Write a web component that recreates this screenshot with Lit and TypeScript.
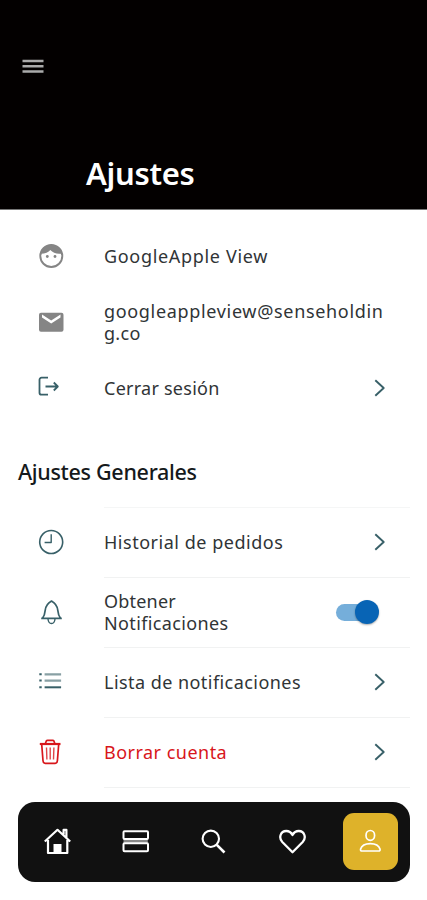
import { LitElement, html, svg, css, nothing } from "lit";
import { customElement, property } from "lit/decorators.js";
import { classMap } from "lit/directives/class-map.js";

const icons: Record<string, unknown> = {
  menu: svg`<path d="M2.500 8h21M2.500 13.200h21M2.500 18.400h21" stroke-width="2.500"/>`,
  face: svg`<circle cx="13.300" cy="13" r="11" stroke-width="1.900"/><path d="M3 10.800C4 5.500 8 1.800 13.300 1.800c5.500 0 10 4 10.700 8.700-4.800 1-9-.6-11.700-3.500-1.700 2.300-5.300 3.700-9.300 3.800z" fill="currentColor" stroke="none"/><circle cx="9.300" cy="13.500" r="1.400" fill="currentColor" stroke="none"/><circle cx="17" cy="13.500" r="1.400" fill="currentColor" stroke="none"/>`,
  mail: svg`<path fill="currentColor" stroke="none" d="M3 3.800h20.500a2 2 0 0 1 2 2v15a2 2 0 0 1-2 2H3a2 2 0 0 1-2-2v-15a2 2 0 0 1 2-2zM13.200 14.500l9.300-6V5.600L13.200 11.600 4 5.600V8.500z" fill-rule="evenodd"/>`,
  exit: svg`<path d="M10 2.700H3.500a2 2 0 0 0-2 2v13a2 2 0 0 0 2 2H10M7.500 11.500h12M15.800 7.500l4 4-4 4" stroke-width="1.800"/>`,
  clock: svg`<circle cx="13.200" cy="13" r="11.500" stroke-width="1.600"/><path d="M13.200 5.300v8.200H6.600" stroke-width="1.400"/>`,
  bell: svg`<path d="M3.200 19.300h20.600M4.500 19.300c2-2.500 2.400-5 2.700-8 .4-4.300 2.800-7.300 6.300-9.300 3.500 2 5.900 5 6.300 9.300.3 3 .7 5.500 2.700 8" stroke-width="1.700"/><path d="M10 20c.3 3 1.700 4.500 3.500 4.500s3.200-1.500 3.500-4.500" stroke-width="1.400"/>`,
  list: svg`<path d="M1.300 5.300h2.400M1.300 11.600h2.400M1.300 18.300h2.400" stroke-width="2"/><path d="M6.600 5.300h16.500M6.600 11.600h16.500" stroke-width="2.200" opacity=".6"/><path d="M6.600 18.300h16.500" stroke-width="2"/>`,
  trash: svg`<path d="M1.800 5h20.700" stroke-width="2.200"/><path d="M7.500 4.300l.8-2.300Q8.700 1.300 9.500 1.300h5.200q.8 0 1.200.7l.8 2.300M3.700 5.300l1.300 16.400q.2 2.600 2.200 2.600h10q2 0 2.200-2.600l1.300-16.400" stroke-width="1.700"/><path d="M8.500 8.500l.4 12M12.200 8.500v12M15.900 8.500l-.4 12" stroke-width="1.400" opacity=".8"/>`,
  chevron: svg`<path d="M9.300 5.200l8.400 7.800-8.400 7.800" stroke-width="1.900"/>`,
  home: svg`<path d="M.8 13.500 13.500 1.800l12.700 11.700M4 12v13h19.300V12M19.600 6.500V1.800h2.800v8" stroke-width="2.200"/><path d="M9.500 25v-9h8v9z" fill="currentColor" stroke="none"/>`,
  rows: svg`<path d="M1.500 12.900h24.300" stroke-width="4" opacity=".5"/><rect x="1.500" y="3.200" width="24.500" height="7.800" rx="1" stroke-width="2"/><rect x="1.500" y="15.200" width="24.500" height="8" rx="1" stroke-width="2"/>`,
  search: svg`<circle cx="10.800" cy="10.800" r="8.200" stroke-width="2.100"/><path d="m16.800 16.800 7.700 7.700" stroke-width="2.600"/>`,
  heart: svg`<path d="M13.500 24.200 3.300 14C-.5 10 1.300 3 7.300 3c2.900 0 5 1.700 6.200 4 1.200-2.300 3.300-4 6.200-4 6 0 7.800 7 4 11z" stroke-width="2.300"/>`,
  user: svg`<ellipse cx="13.300" cy="7.400" rx="4.300" ry="4.900" stroke-width="1.700"/><path d="M5.100 23c-1.400 0-1.800-.8-1.500-2 1-3.300 4.700-5.400 9.700-5.400s8.700 2.100 9.700 5.400c.3 1.200-.1 2-1.500 2z" stroke-width="1.700"/>`,
};

const icon = (name: string) => html`<svg viewBox="0 0 27 27" class="icon">${icons[name]}</svg>`;

const iconStyles = css`
  .icon { width: 27px; height: 27px; display: block; flex: none; fill: none; stroke: currentColor; stroke-linejoin: round; }
`;

@customElement("settings-row")
class SettingsRow extends LitElement {
  @property() icon = "";
  @property({ attribute: false }) lines: [string, number][] = [];
  @property() action = "";
  @property() tone = "";
  @property({ type: Boolean }) divided = false;

  static styles = [iconStyles, css`
    :host { display: block; }
    .row { display: grid; grid-template-columns: 66px 1fr auto; align-items: center; height: 100%; box-sizing: border-box; padding: 0 34px 0 38px; position: relative; color: #303436; }
    .divided::after { content: ""; position: absolute; left: 104px; right: 17px; bottom: -1px; height: 1px; background: #f1f2f2; }
    .glyph { color: #386068; }
    .grey .glyph { color: #858585; }
    .danger { color: #d8161b; }
    .danger .glyph { color: #d8161b; }
    .label { font-size: 18px; line-height: 22px; white-space: nowrap; }
    .line { display: block; }
    .chevron { color: #386068; }
    .switch { width: 43px; height: 24px; display: flex; align-items: center; justify-content: flex-end; position: relative; }
    .track { width: 36px; height: 17px; border-radius: 9px; background: #75aeda; margin-right: 7px; }
    .thumb { position: absolute; right: 0; width: 24px; height: 24px; border-radius: 50%; background: #0864b5; box-shadow: 0 1px 2px #0005; }
    .toggle { margin-right: 14px; }
  `];

  render() {
    const control = this.action === "open"
      ? html`<div class="chevron">${icon("chevron")}</div>`
      : this.action === "switch"
        ? html`<div class="toggle"><div class="switch"><div class="track"></div><div class="thumb"></div></div></div>`
        : nothing;
    return html`<div class=${classMap({ row: true, divided: this.divided, grey: this.tone === "grey", danger: this.tone === "danger" })}>
      <div class="glyph">${icon(this.icon)}</div>
      <div class="label">${this.lines.map(([t, s]) => html`<span class="line" style="letter-spacing:${s}px">${t}</span>`)}</div>
      ${control}
    </div>`;
  }
}

@customElement("app-root")
class AppRoot extends LitElement {
  static styles = [iconStyles, css`
    :host { display: flex; flex-direction: column; height: 900px; overflow: hidden; background: #fff; font-family: "Noto Sans", "Open Sans", sans-serif; }
    .header { height: 210px; box-sizing: border-box; background: #030000; padding: 53px 20px 0; border-bottom: 1px solid #777; flex: none; }
    .menu { color: #aaa; }
    .title { margin: 73px 0 0 66px; font-size: 31px; line-height: 40px; font-weight: 600; letter-spacing: -.3px; color: #fff; }
    .account { padding-top: 13px; display: grid; grid-template-rows: repeat(3, 66px); flex: none; }
    .section { margin: 32px 0 0 18px; height: 38px; font-size: 21.500px; line-height: 38px; font-weight: 500; color: #15191b; white-space: nowrap; flex: none; letter-spacing: -.3px; }
    .general { margin-top: 16px; display: grid; grid-template-rows: repeat(4, 70px); position: relative; flex: none; }
    .general::before { content: ""; position: absolute; top: 0; left: 104px; right: 17px; height: 1px; background: #f5f6f6; }
    .nav { margin: 15px 17px 0 18px; height: 80px; box-sizing: border-box; border-radius: 17px; background: #111; display: grid; grid-template-columns: repeat(5, 78.400px); align-items: center; justify-items: center; color: #fff; flex: none; }
    .tab { width: 55px; height: 57px; margin-top: -1px; display: grid; place-items: center; border-radius: 11px; }
    .active { background: #deb22a; }
  `];

  render() {
    return html`
      <div class="header"><div class="menu">${icon("menu")}</div><div class="title">Ajustes</div></div>
      <div class="account">
        <settings-row icon="face" tone="grey" .lines=${[["GoogleApple View", 0.67]]}></settings-row>
        <settings-row icon="mail" tone="grey" .lines=${[["googleappleview@senseholdin", 0.67], ["g.co", 0.3]]}></settings-row>
        <settings-row icon="exit" action="open" .lines=${[["Cerrar sesión", 0.25]]}></settings-row>
      </div>
      <div class="section">Ajustes Generales</div>
      <div class="general">
        <settings-row divided icon="clock" action="open" .lines=${[["Historial de pedidos", 0.52]]}></settings-row>
        <settings-row divided icon="bell" action="switch" .lines=${[["Obtener", 0.2], ["Notificaciones", 0.36]]}></settings-row>
        <settings-row divided icon="list" action="open" .lines=${[["Lista de notificaciones", 0.45]]}></settings-row>
        <settings-row divided icon="trash" tone="danger" action="open" .lines=${[["Borrar cuenta", 0.48]]}></settings-row>
      </div>
      <div class="nav">
        ${["home", "rows", "search", "heart", "user"].map((n) => html`<div class=${classMap({ tab: true, active: n === "user" })}>${icon(n)}</div>`)}
      </div>`;
  }
}
